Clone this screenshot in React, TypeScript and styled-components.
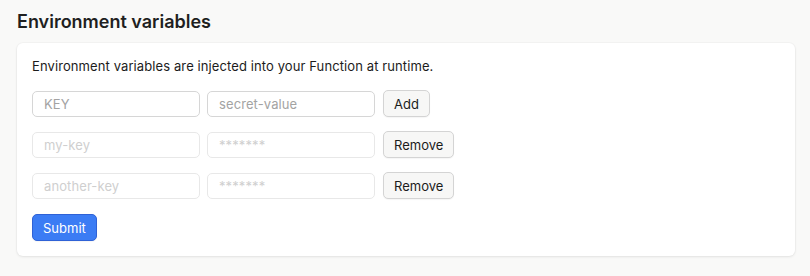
import styled, { createGlobalStyle } from 'styled-components';

const GlobalStyle = createGlobalStyle`
  html, body {
    margin: 0;
    background: #f9f9f8;
    font-family: Inter, "Noto Sans", sans-serif;
    color: #1c1c1c;
  }
`;

const Page = styled.div`
  padding: 10px 15px 20px 17px;
`;

const Title = styled.h2`
  margin: 0 0 9px;
  font-size: 18px;
  font-weight: 600;
  line-height: 24px;
  color: #1f1f1f;
`;

const Card = styled.div`
  background: #ffffff;
  border-radius: 6px;
  box-shadow: 0 1px 3px rgba(0, 0, 0, 0.08), 0 0 0 1px rgba(0, 0, 0, 0.02);
  padding: 14px 15px 15px;
  display: flex;
  flex-direction: column;
  gap: 14px;
`;

const Description = styled.p`
  margin: 0 0 1px;
  font-size: 13px;
  line-height: 18px;
  letter-spacing: 0.1px;
`;

const Row = styled.div`
  display: flex;
  align-items: center;
  gap: 7px;
`;

const Field = styled.input`
  box-sizing: border-box;
  width: 168px;
  height: 26px;
  padding: 0 11px;
  border: 1px solid #d6d6d6;
  border-radius: 5px;
  background: #fff;
  font: 13px Inter, "Noto Sans", sans-serif;
  letter-spacing: 0.1px;
  color: #1c1c1c;

  &::placeholder {
    color: #a3a3a3;
  }

  &:disabled {
    border-color: #e8e8e8;
  }

  &:disabled::placeholder {
    color: #cfcfcf;
  }
`;

const Button = styled.button<{ $primary?: boolean }>`
  height: 27px;
  padding: 0 10px;
  margin-left: ${({ $primary }) => ($primary ? '0' : '1px')};
  border-radius: 5px;
  font: 13px Inter, "Noto Sans", sans-serif;
  cursor: pointer;
  border: 1px solid ${({ $primary }) => ($primary ? '#2f62d6' : '#d4d4d4')};
  background: ${({ $primary }) => ($primary ? '#3b7cf4' : '#f7f7f6')};
  color: ${({ $primary }) => ($primary ? '#ffffff' : '#1c1c1c')};
  box-shadow: 0 1px 1px rgba(0, 0, 0, 0.04);
`;

const SubmitRow = styled.div`
  display: flex;
  margin-top: 1px;
`;

const entries = [{ key: 'my-key' }, { key: 'another-key' }];

export default function App() {
  return (
    <>
      <GlobalStyle />
      <Page>
        <Title>Environment variables</Title>
        <Card>
          <Description>Environment variables are injected into your Function at runtime.</Description>
          <Row>
            <Field placeholder="KEY" />
            <Field placeholder="secret-value" />
            <Button>Add</Button>
          </Row>
          {entries.map((e) => (
            <Row key={e.key}>
              <Field placeholder={e.key} disabled />
              <Field placeholder="*******" disabled />
              <Button>Remove</Button>
            </Row>
          ))}
          <SubmitRow>
            <Button $primary>Submit</Button>
          </SubmitRow>
        </Card>
      </Page>
    </>
  );
}
